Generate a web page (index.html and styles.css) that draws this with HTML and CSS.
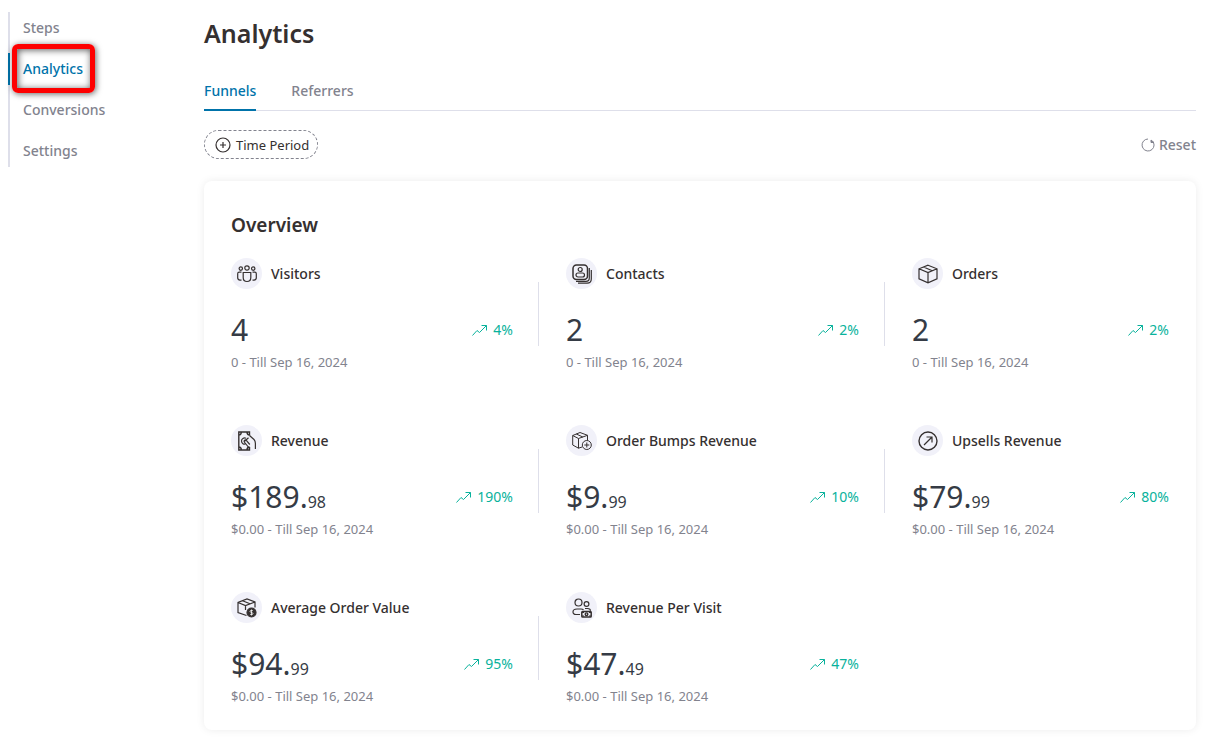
FILE: index.html
```html
<!DOCTYPE html>
<html lang="en">
<head>
<meta charset="utf-8">
<meta name="viewport" content="width=device-width, initial-scale=1">
<title>Analytics</title>
<link rel="stylesheet" href="styles.css">
</head>
<body>
<svg class="sprite" aria-hidden="true">
  <symbol id="trend" viewBox="0 0 16 12"><path d="M.5 11.500 5 6.500l2.500 2L14.500 1.500M9.500 1.500h5v5"/></symbol>
</svg>
<div class="layout">
  <nav class="sidebar" aria-label="Funnel">
    <a class="side-link" href="#">Steps</a>
    <a class="side-link is-active" href="#" aria-current="page">Analytics<span class="highlight"></span></a>
    <a class="side-link" href="#">Conversions</a>
    <a class="side-link" href="#">Settings</a>
  </nav>
  <main class="main">
    <h1 class="title">Analytics</h1>
    <div class="tabs" role="tablist">
      <button class="tab is-active" role="tab" aria-selected="true">Funnels</button>
      <button class="tab" role="tab" aria-selected="false">Referrers</button>
    </div>
    <div class="toolbar">
      <button class="filter">
        <svg width="16" height="16" viewBox="0 0 16 16"><circle cx="8" cy="8" r="7"/><path d="M8 5v6M5 8h6"/></svg>Time Period
      </button>
      <button class="reset">
        <svg width="14" height="14" viewBox="0 0 14 14"><path d="M7 1a6 6 0 1 0 5.500 3.500"/><path d="M10 4.500V2l3 2.500z" fill="currentColor"/></svg>Reset
      </button>
    </div>
    <section class="card">
      <h2 class="card-title">Overview</h2>
      <div class="stats">
        <article class="stat">
          <h3 class="stat-head"><span class="badge"><svg width="20" height="18" viewBox="0 0 20 18"><circle cx="3.800" cy="3.600" r="1.700"/><circle cx="10" cy="3" r="2.200"/><circle cx="16.200" cy="3.600" r="1.700"/><path d="M6.200 7.500h7.600v5c0 2.500-1.500 4-3.800 4s-3.800-1.500-3.800-4zM4.500 7.200H2.200c-.9 0-1.500.6-1.500 1.500v4c0 1.400.9 2.300 2.300 2.500h1.500M15.500 7.200h2.300c.9 0 1.500.6 1.500 1.500v4c0 1.400-.9 2.300-2.300 2.500h-1.500"/></svg></span>Visitors</h3>
          <div class="stat-row"><span class="value">4</span><span class="change"><svg width="16" height="12"><use href="#trend"/></svg>4%</span></div>
          <p class="note">0 - Till Sep 16, 2024</p>
        </article>
        <article class="stat">
          <h3 class="stat-head"><span class="badge"><svg width="20" height="20" viewBox="0 0 20 20"><rect x="1" y="1" width="14.500" height="14.500" rx="3.500" stroke-width="1.500"/><circle cx="8.200" cy="5.500" r="2"/><rect x="4" y="9" width="8.500" height="4" rx="2"/><path d="M17.300 4v10c0 2-1.300 3.300-3.300 3.300H4M19.300 6v9c0 2.700-1.600 4.200-4.200 4.200H6"/></svg></span>Contacts</h3>
          <div class="stat-row"><span class="value">2</span><span class="change"><svg width="16" height="12"><use href="#trend"/></svg>2%</span></div>
          <p class="note">0 - Till Sep 16, 2024</p>
        </article>
        <article class="stat">
          <h3 class="stat-head"><span class="badge"><svg width="20" height="20" viewBox="0 0 20 20"><path d="M10 1.200 19 4.800v10L10 18.800 1 14.800v-10zM1 4.800l9 3.800 9-3.800M10 8.600v10.200M5.500 3l8.800 3.700M5.500 3l3-1.200"/></svg></span>Orders</h3>
          <div class="stat-row"><span class="value">2</span><span class="change"><svg width="16" height="12"><use href="#trend"/></svg>2%</span></div>
          <p class="note">0 - Till Sep 16, 2024</p>
        </article>
        <article class="stat">
          <h3 class="stat-head"><span class="badge"><svg width="20" height="20" viewBox="0 0 20 20"><path d="M12.500 4.500V1H1.800v18h10.700v-3M1.800 4c1.500 0 2.500-1 2.500-3M12.500 4C11 4 10 3 10 1M1.800 16c1.500 0 2.500 1 2.500 3M12.500 16C11 16 10 17 10 19" stroke-width="1.400"/><path d="M9 7.300C6.800 6.300 4.500 7.700 4.500 10s2.300 3.800 4.300 2.800M12.500 4.500l4.500 4c1 1 1.400 2 1.400 4V18M7 10.800l4.500-4M12.800 13.500 9.300 9.300c-1-1.100-2.900.5-2 1.700l5.200 6.500"/></svg></span>Revenue</h3>
          <div class="stat-row"><span class="value">$189.<small class="cents">98</small></span><span class="change"><svg width="16" height="12"><use href="#trend"/></svg>190%</span></div>
          <p class="note">$0.00 - Till Sep 16, 2024</p>
        </article>
        <article class="stat">
          <h3 class="stat-head"><span class="badge"><svg class="fine" width="20" height="20" viewBox="0 0 20 20"><path d="M10 16 6.500 17.200.7 14V4.500L8 1.500l7.500 2.800v5M.7 4.500l5.800 3 9-3.200M6.500 7.500v9.700M4.300 3l6.500 3"/><circle cx="14.800" cy="14" r="4.500"/><path d="M14.800 11.500v5M12.300 14h5"/></svg></span>Order Bumps Revenue</h3>
          <div class="stat-row"><span class="value">$9.<small class="cents">99</small></span><span class="change"><svg width="16" height="12"><use href="#trend"/></svg>10%</span></div>
          <p class="note">$0.00 - Till Sep 16, 2024</p>
        </article>
        <article class="stat">
          <h3 class="stat-head"><span class="badge"><svg width="20" height="20" viewBox="0 0 20 20"><circle cx="10" cy="10" r="9" stroke-width="1.400"/><path d="m6 14 8-8M8.500 6H14v5.500"/></svg></span>Upsells Revenue</h3>
          <div class="stat-row"><span class="value">$79.<small class="cents">99</small></span><span class="change"><svg width="16" height="12"><use href="#trend"/></svg>80%</span></div>
          <p class="note">$0.00 - Till Sep 16, 2024</p>
        </article>
        <article class="stat">
          <h3 class="stat-head"><span class="badge"><svg width="20" height="20" viewBox="0 0 20 20"><path d="M9.500 17.500 1 14.500V4.500L10 1l8 3v5.500M1 4.500l7.500 3L18 4M8.500 7.500V12M5.500 2.800l7.500 3"/><circle cx="14.500" cy="14.500" r="4.500" fill="currentColor"/><path d="M16 13c-.5-1-3-.9-3 .4 0 1.500 3 .7 3 2.200 0 1.300-2.500 1.400-3 .3M14.500 11.600v5.800" stroke="#fff" stroke-width=".8"/></svg></span>Average Order Value</h3>
          <div class="stat-row"><span class="value">$94.<small class="cents">99</small></span><span class="change"><svg width="16" height="12"><use href="#trend"/></svg>95%</span></div>
          <p class="note">$0.00 - Till Sep 16, 2024</p>
        </article>
        <article class="stat">
          <h3 class="stat-head"><span class="badge"><svg width="20" height="20" viewBox="0 0 20 20"><circle cx="6.500" cy="4.500" r="3.500"/><circle cx="14.500" cy="6" r="2.400"/><path d="M8 16.500H4c-2 0-3-1-3-2.500C1 12 2.500 11 5 11h4c1 0 2 .3 2.500 1M13 10.500h2.500c2 0 3 .8 3 2.300"/><rect x="9.800" y="13.500" width="9.400" height="5.500" rx=".8" stroke-width="1.500"/><circle cx="14.500" cy="16.200" r="1.300" stroke-width="1.400"/><path d="M10 14.500h2M10 18h2M17 14.500h2M17 18h2"/></svg></span>Revenue Per Visit</h3>
          <div class="stat-row"><span class="value">$47.<small class="cents">49</small></span><span class="change"><svg width="16" height="12"><use href="#trend"/></svg>47%</span></div>
          <p class="note">$0.00 - Till Sep 16, 2024</p>
        </article>
      </div>
    </section>
  </main>
</div>
</body>
</html>
```
FILE: styles.css
```css
* { box-sizing: border-box; }
body {
  margin: 0;
  background: #fff;
  color: #353030;
  font-family: "Segoe UI", "Noto Sans", "Open Sans", sans-serif;
  font-size: 14px;
  line-height: 20px;
}
h1, h2, h3, p { margin: 0; }
button {
  padding: 0;
  border: 0;
  background: none;
  font: inherit;
  cursor: pointer;
}
svg { flex: none; fill: none; stroke: currentColor; stroke-width: 1.2; }
.sprite { position: absolute; width: 0; height: 0; }
.layout {
  display: grid;
  grid-template-columns: 196px minmax(0, 1fr);
  align-items: start;
  padding: 12px 11px 8px 8px;
}
.sidebar {
  display: flex;
  flex-direction: column;
  gap: 9px;
  box-shadow: inset 2px 0 #dedfea;
}
.side-link {
  position: relative;
  border-left: 2px solid transparent;
  padding-left: 13px;
  color: #82838e;
  font-weight: 500;
  line-height: 32px;
  text-decoration: none;
}
.side-link.is-active { border-color: #0073aa; color: #0073aa; }
.highlight {
  position: absolute;
  top: -9px;
  left: 2px;
  width: 83px;
  height: 49px;
  border: 5px solid #fe0000;
  border-radius: 6px;
  box-shadow: 1px 1px 6px rgba(0, 0, 0, .6), inset 1px 1px 7px rgba(0, 0, 0, .65);
}
.title { font-size: 25px; font-weight: 600; line-height: 42px; }
.tabs {
  display: flex;
  gap: 35px;
  margin-top: 16px;
  border-bottom: 1px solid #dedfea;
}
.tab {
  height: 41px;
  margin-bottom: -1px;
  padding-top: 2px;
  border-bottom: 2px solid transparent;
  color: #82838e;
  font-weight: 500;
}
.tab.is-active { border-color: #0073aa; color: #0073aa; }
.toolbar {
  display: flex;
  align-items: center;
  justify-content: space-between;
  margin: 19px 0 22px;
}
.filter, .reset { display: flex; align-items: center; }
.filter {
  gap: 5px;
  height: 29px;
  padding: 0 8px 0 10px;
  border: 1px dashed #82838e;
  border-radius: 15px;
  color: #353030;
  font-size: 13px;
}
.reset { gap: 4px; color: #82838e; font-weight: 500; }
.reset svg { stroke-width: 1; }
.card {
  padding: 30px 27px 24px;
  border-radius: 8px;
  box-shadow: 0 0 8px rgba(0, 0, 0, .08);
}
.card-title { font-size: 19px; font-weight: 600; line-height: 28px; }
.stats {
  display: grid;
  grid-template-columns: 308fr 346fr 284fr;
  row-gap: 53px;
  margin-top: 19px;
}
.stat { position: relative; padding: 0 26px 0 27px; }
.stat:nth-child(3n + 1) { padding-left: 0; }
.stat:nth-child(3n) { padding-right: 0; }
.stat:not(:nth-child(3n))::after {
  content: "";
  position: absolute;
  top: 24px;
  right: 0;
  width: 1px;
  height: 64px;
  background: #dedfea;
}
.stat:last-child::after { display: none; }
.stat-head {
  display: flex;
  align-items: center;
  gap: 9px;
  font-size: 14px;
  font-weight: 500;
}
.badge {
  display: grid;
  place-items: center;
  width: 31px;
  height: 31px;
  border-radius: 50%;
  background: #f1f1f9;
}
.fine { stroke-width: 1; }
.stat-row {
  display: flex;
  align-items: center;
  justify-content: space-between;
  margin-top: 21px;
  color: #353b45;
}
.value { font-size: 30px; line-height: 40px; }
.cents { font-size: 16px; line-height: 1; }
.change { display: flex; align-items: center; gap: 5px; color: #09b29c; }
.change svg { stroke-width: 1; }
.note { margin-top: 2px; color: #82838e; font-size: 13px; }
```
